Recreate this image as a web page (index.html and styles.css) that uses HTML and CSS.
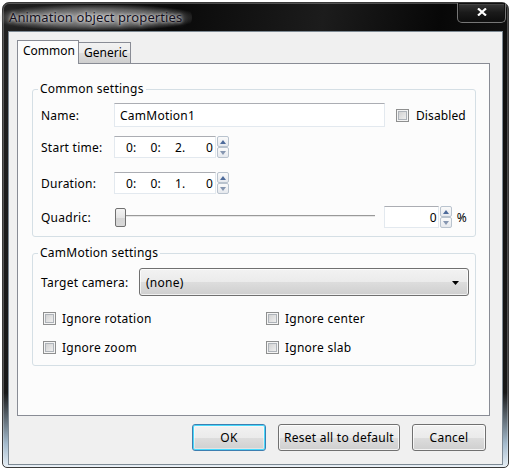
FILE: index.html
```html
<!DOCTYPE html>
<html>
<head>
<meta charset="utf-8">
<link rel="stylesheet" href="styles.css">
</head>
<body>
<div class="window">
  <div class="titlebar">
    <span class="title">Animation object properties</span>
    <span class="close"><svg width="10" height="8" viewBox="0 0 10 8"><path d="M1 0.5 L9 7.5 M9 0.5 L1 7.5" stroke="#fff" stroke-width="2.2"/></svg></span>
  </div>
  <div class="client">
    <div class="tabs">
      <div class="tab active">Common</div>
      <div class="tab">Generic</div>
    </div>
    <div class="panel">
      <fieldset class="group g1">
        <legend>Common settings</legend>
        <div class="rows">
          <div class="row r-name">
            <span class="lbl">Name:</span>
            <div class="textbox name">CamMotion1</div>
            <div class="check disabled-check"><span class="box"></span>Disabled</div>
          </div>
          <div class="row r-start">
            <span class="lbl">Start time:</span>
            <div class="spin">
              <div class="field time"><span>0:</span><span>0:</span><span>2.</span><span class="last">0</span></div>
              <div class="arrows"><span class="up"></span><span class="down"></span></div>
            </div>
          </div>
          <div class="row r-dur">
            <span class="lbl">Duration:</span>
            <div class="spin">
              <div class="field time"><span>0:</span><span>0:</span><span>1.</span><span class="last">0</span></div>
              <div class="arrows"><span class="up"></span><span class="down"></span></div>
            </div>
          </div>
          <div class="row r-quad">
            <span class="lbl">Quadric:</span>
            <div class="slider"><span class="thumb"></span><span class="track"></span></div>
            <div class="spin pct">
              <div class="field num">0</div>
              <div class="arrows"><span class="up"></span><span class="down"></span></div>
            </div>
            <span class="unit">%</span>
          </div>
        </div>
      </fieldset>
      <fieldset class="group g2">
        <legend>CamMotion settings</legend>
        <div class="rows2">
          <div class="row r-cam">
            <span class="lbl2">Target camera:</span>
            <div class="combo"><span>(none)</span><svg width="7" height="4" viewBox="0 0 7 4"><path d="M0 0H7L3.5 4Z" fill="#000"/></svg></div>
          </div>
          <div class="checks">
            <div class="check"><span class="box"></span>Ignore rotation</div>
            <div class="check"><span class="box"></span>Ignore center</div>
            <div class="check"><span class="box"></span>Ignore zoom</div>
            <div class="check"><span class="box"></span>Ignore slab</div>
          </div>
        </div>
      </fieldset>
    </div>
    <div class="buttons">
      <div class="btn default">OK</div>
      <div class="btn wide">Reset all to default</div>
      <div class="btn">Cancel</div>
    </div>
  </div>
</div>
</body>
</html>
```
FILE: styles.css
```css
html, body { margin: 0; padding: 0; }
body {
  background: #ffffff;
  font-family: "Noto Sans", "Open Sans", sans-serif;
  font-size: 12px;
  letter-spacing: 0.25px;
  color: #000;
  width: 511px;
  height: 475px;
  overflow: hidden;
}
.window {
  margin: 2px 0 0 2px;
  width: 507px;
  height: 466px;
  box-sizing: border-box;
  border: 1px solid #3a3a3a;
  border-radius: 7px 7px 5px 5px;
  padding: 0 5px 2px 5px;
  background:
    linear-gradient(to bottom, rgba(0,0,0,0) 0, rgba(0,0,0,0) 84%, rgba(180,205,225,0.9) 95%, #e6eef5 100%),
    linear-gradient(100deg, #222 0, #0a0a0a 30%, #1c1c1c 55%, #070707 75%, #1b1b1b 100%);
  box-shadow: inset 0 0 0 1px rgba(255,255,255,0.25);
  display: flex;
  flex-direction: column;
}
.titlebar {
  height: 28px;
  display: flex;
  justify-content: space-between;
  align-items: flex-start;
}
.title {
  margin: 2px 0 0 -8px;
  padding: 4px 10px 5px 9px;
  font-size: 13px;
  line-height: 16px;
  letter-spacing: 0.1px;
  color: #14101c;
  border-radius: 14px;
  background: radial-gradient(ellipse at center, rgba(185,185,185,0.85) 0, rgba(150,150,150,0.55) 50%, rgba(60,60,60,0) 78%);
  text-shadow: 0 0 3px #eee, 0 0 6px #ddd;
}
.close {
  width: 49px;
  height: 20px;
  margin: 0 -3px 0 0;
  box-sizing: border-box;
  border: 1px solid #767676;
  border-top: none;
  border-radius: 0 0 5px 5px;
  background: linear-gradient(to bottom, #3a3a3a, #1a1a1a 50%, #0d0d0d);
  box-shadow: inset 0 0 0 1px #111, inset 0 1px 0 1px rgba(255,255,255,0.08);
  display: flex;
  align-items: center;
  justify-content: center;
}
.close svg { display: block; margin-top: -2px; }
.client {
  flex: 1;
  background: #f0f0f0;
  border: 1px solid #7d8993;
  display: flex;
  flex-direction: column;
  padding: 8px 12px 0 8px;
}
.tabs {
  display: flex;
  align-items: flex-end;
  height: 23px;
  position: relative;
  z-index: 1;
  letter-spacing: 0;
}
.tab {
  box-sizing: border-box;
  border: 1px solid #898c95;
  border-bottom: none;
  padding: 0 4px;
  line-height: 20px;
  height: 21px;
  background: linear-gradient(to bottom, #f2f2f2, #ebebeb 50%, #dddddd 51%, #cfcfcf);
}
.tab.active {
  height: 24px;
  margin-bottom: -1px;
  background: #fcfcfc;
  line-height: 20px;
  padding: 0 4px 0 5px;
  width: 62px;
}
.tab + .tab { margin-left: -1px; width: 53px; padding-left: 5px; }
.panel {
  height: 353px;
  box-sizing: border-box;
  background: #fcfcfc;
  border: 1px solid #898c95;
  padding: 0 13px 0 14px;
}
.group {
  margin: 17px 0 0 0;
  padding: 0;
  border: 1px solid #d5dfe5;
  border-radius: 3px;
  min-width: 0;
}
.group legend {
  margin-left: 5px;
  padding: 0 2px;
  line-height: 16px;
}
.g2 { margin-top: 8px; }
.rows {
  padding: 6px 8px 8px 8px;
  display: flex;
  flex-direction: column;
}
.row { display: flex; align-items: center; }
.lbl { width: 73px; flex: none; }
.r-name { height: 24px; }
.r-start { height: 22px; margin-top: 9px; }
.r-dur { height: 22px; margin-top: 14px; }
.r-quad { height: 22px; margin-top: 12px; }
.textbox, .field {
  box-sizing: border-box;
  border: 1px solid #e3e9ef;
  border-top-color: #abadb3;
  background: #fff;
  height: 100%;
  display: flex;
  align-items: center;
}
.textbox.name { width: 271px; padding-left: 5px; }
.check { display: flex; align-items: center; }
.box {
  width: 13px;
  height: 13px;
  box-sizing: border-box;
  border: 1px solid #8e8f8f;
  background: linear-gradient(135deg, #cbcbcb, #f6f6f6);
  box-shadow: inset 0 0 0 1px #f4f4f4, inset 0 0 0 2px #aeb3b9;
  margin-right: 7px;
  flex: none;
}
.disabled-check { margin-left: 11px; letter-spacing: 0.1px; }
.spin { display: flex; height: 100%; }
.field.time { width: 102px; padding-left: 11px; padding-right: 2px; }
.field.time span { width: 24.5px; flex: none; }
.field.time span.last { flex: 1; text-align: right; width: auto; }
.arrows {
  width: 12px;
  display: flex;
  flex-direction: column;
  margin-left: 1px;
}
.arrows span {
  flex: 1;
  box-sizing: border-box;
  border: 1px solid #b9c3ce;
  border-radius: 2px;
  background: linear-gradient(to bottom, #fafafa, #e6e9ee);
  position: relative;
}
.arrows span::after {
  content: "";
  position: absolute;
  left: 2px;
  top: 3px;
  border-left: 3px solid transparent;
  border-right: 3px solid transparent;
}
.arrows .up::after { border-bottom: 4px solid #4d6a9a; }
.arrows .down::after { border-top: 4px solid #8696b0; top: 3px; }
.slider {
  width: 264px;
  height: 100%;
  display: flex;
  align-items: center;
  margin-left: 1px;
}
.thumb {
  width: 11px;
  height: 19px;
  box-sizing: border-box;
  border: 1px solid #707070;
  border-radius: 2px;
  background: linear-gradient(to bottom, #f4f4f4, #e5e5e5 50%, #d4d4d4 51%, #d8d8d8);
  flex: none;
}
.track {
  flex: 1;
  height: 1px;
  background: #999;
  border-bottom: 1px solid #e6e6e6;
  margin-top: -2px;
}
.spin.pct { margin-left: 9px; }
.field.num { width: 55px; justify-content: flex-end; padding-right: 1px; }
.unit { margin-left: 5px; }
.rows2 { padding: 7px 6px 8px 8px; }
.r-cam { height: 28px; }
.lbl2 { width: 98px; flex: none; }
.combo {
  flex: 1;
  height: 100%;
  box-sizing: border-box;
  border: 1px solid #707070;
  border-radius: 3px;
  background: linear-gradient(to bottom, #f2f2f2, #ebebeb 50%, #dddddd 51%, #cfcfcf);
  box-shadow: inset 0 0 0 1px rgba(255,255,255,0.7);
  display: flex;
  align-items: center;
  justify-content: space-between;
  padding: 0 9px 0 6px;
}
.combo svg { display: block; margin-top: 1px; }
.checks {
  display: grid;
  grid-template-columns: 223px 1fr;
  grid-auto-rows: 20px;
  row-gap: 9px;
  margin-top: 12px;
  padding-left: 2px;
}
.checks .box { margin-right: 6px; }
.buttons {
  display: flex;
  justify-content: flex-end;
  gap: 12px;
  margin-top: 8px;
  padding-right: 4px;
}
.btn {
  width: 74px;
  height: 27px;
  box-sizing: border-box;
  border: 1px solid #707070;
  border-radius: 3px;
  background: linear-gradient(to bottom, #f2f2f2, #ebebeb 50%, #dddddd 51%, #cfcfcf);
  box-shadow: inset 0 0 0 1px rgba(255,255,255,0.75);
  display: flex;
  align-items: center;
  justify-content: center;
}
.btn.wide { width: 122px; }
.btn.default {
  border-color: #3c7fb1;
  box-shadow: inset 0 0 0 1px #48d8fb, inset 0 0 0 2px rgba(255,255,255,0.4);
}
```
